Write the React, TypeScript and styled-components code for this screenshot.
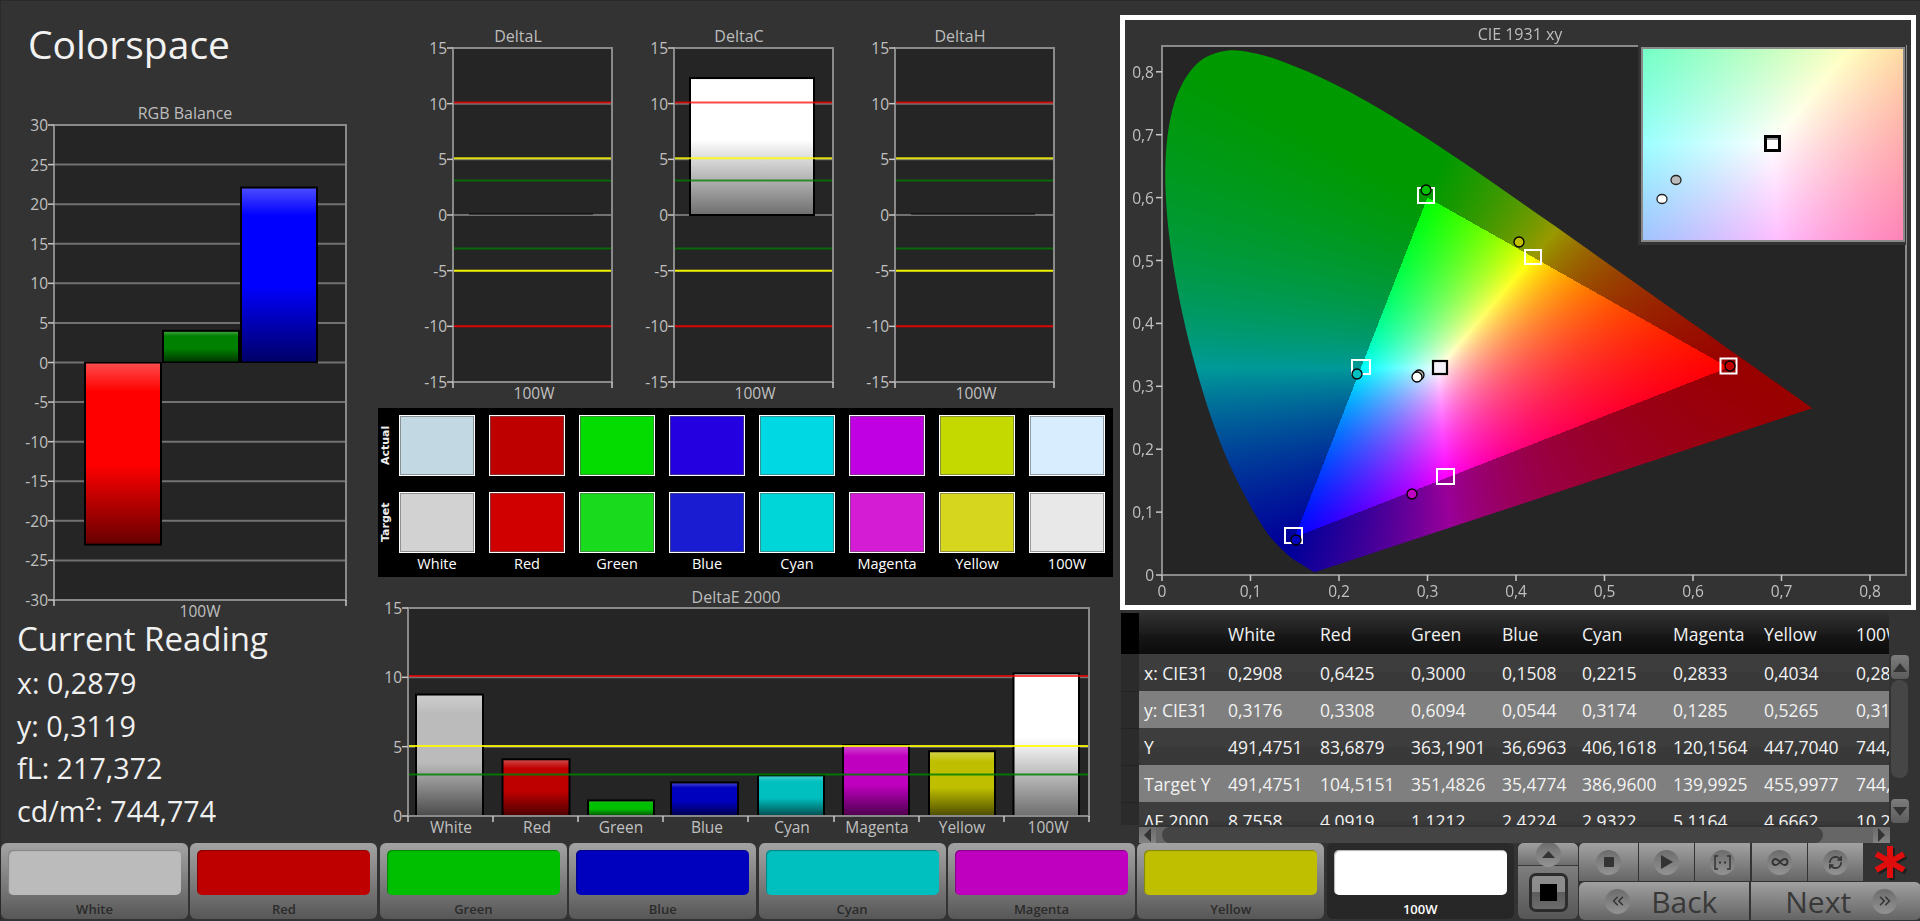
import React, { useEffect, useRef } from "react";
import styled, { createGlobalStyle } from "styled-components";
import { ChevronsLeft, ChevronsRight, Infinity as InfinityIcon, RefreshCw } from "lucide-react";

const FONT = '"Open Sans", "Noto Sans", sans-serif';

const GlobalStyle = createGlobalStyle`
  html, body {
    margin: 0;
    background: #333;
    overflow: hidden;
  }
  * {
    box-sizing: border-box;
  }
`;

const Page = styled.div`
  width: 1920px;
  height: 921px;
  display: flex;
  flex-direction: column;
  background: #333;
  border-top: 1px solid #2a2a2a;
  border-left: 1px solid #2a2a2a;
  font-family: ${FONT};
  overflow: hidden;
`;

const Main = styled.div`
  height: 842px;
  display: flex;
`;

const LeftColumn = styled.div`
  width: 374px;
  display: flex;
  flex-direction: column;
`;

const MiddleColumn = styled.div`
  width: 735px;
  display: flex;
  flex-direction: column;
`;

const RightColumn = styled.div`
  width: 810px;
  padding: 14px 0 0 10px;
  display: flex;
  flex-direction: column;
`;

const Title = styled.h1`
  margin: 0;
  height: 99px;
  padding: 18px 0 0 27px;
  font-size: 39px;
  line-height: 50px;
  font-weight: 400;
  color: #f2f2f2;
`;

const Reading = styled.div`
  padding: 2px 0 0 16px;
  color: #f0f0f0;
`;

const ReadingTitle = styled.div`
  font-size: 33px;
  line-height: 44px;
  margin-bottom: 1px;
`;

const ReadingValue = styled.div`
  font-size: 28.7px;
  line-height: 42.6px;
`;

const ChartSvg = styled.svg`
  display: block;
  flex: none;
  overflow: visible;
`;

const ChartTitle = styled.text`
  font-family: ${FONT};
  font-size: 16px;
  fill: #bdbdbd;
  text-anchor: middle;
`;

const AxisLabel = styled.text`
  font-family: ${FONT};
  font-size: 15.5px;
  fill: #c0c0c0;
`;

const DeltaRow = styled.div`
  height: 407px;
  padding-left: 20px;
  display: flex;
`;

const SwatchPanel = styled.div`
  width: 735px;
  height: 169px;
  margin-left: 3px;
  padding-top: 7px;
  background: #000;
  display: grid;
  grid-template-columns: 7px repeat(8, 76px);
  grid-template-rows: 61px 16px 61px 23px;
  column-gap: 14px;
`;

const SideLabel = styled.div`
  width: 16px;
  margin-left: 1px;
  writing-mode: vertical-rl;
  transform: rotate(180deg);
  text-align: center;
  font-family: "DejaVu Sans", sans-serif;
  font-weight: 700;
  font-size: 11px;
  color: #eee;
`;

const Swatch = styled.div<{ $color: string }>`
  background: ${(p) => p.$color};
  border: 1px solid #fff;
  box-shadow: inset 0 0 0 1px rgba(90, 90, 90, 0.55);
`;

const SwatchLabel = styled.div`
  font-size: 14.5px;
  line-height: 22px;
  text-align: center;
  color: #fff;
`;

const RowGap = styled.div`
  grid-column: 1 / -1;
`;

const CiePanel = styled.div`
  position: relative;
  width: 796px;
  height: 596px;
  border: 5px solid #fff;
  background: #333;
`;

const CieSvg = styled.svg`
  position: absolute;
  left: 0;
  top: 0;
`;

const GamutLayer = styled.canvas`
  position: absolute;
  display: block;
  left: 37px;
  top: 26px;
`;

const Inset = styled.div`
  position: absolute;
  left: 513px;
  top: 25px;
  width: 268px;
  height: 200px;
  padding: 2px 3px;
  background: #333;
`;

const InsetView = styled.div`
  position: relative;
  width: 264px;
  height: 195px;
  border: 2px solid #8a8a8a;
  & canvas {
    display: block;
  }
  & svg {
    position: absolute;
    left: 0;
    top: 0;
  }
`;

const TableArea = styled.div`
  margin: 3px 0 0 1px;
  display: grid;
  grid-template-columns: 768px 21px;
  grid-template-rows: 212px 18px;
`;

const DataTable = styled.table`
  width: 768px;
  height: 212px;
  display: block;
  overflow: hidden;
  table-layout: fixed;
  border-collapse: collapse;
  color: #f2f2f2;
  font-size: 17.5px;
`;

const HeadRow = styled.tr`
  height: 41px;
  background: linear-gradient(#303030 0, #1c1c1c 50%, #181818 50%, #0b0b0b 100%);
`;

const BodyRow = styled.tr<{ $alt?: boolean }>`
  height: 37px;
  background: ${(p) => (p.$alt ? "#7f7f7f" : "linear-gradient(#3d3d3d 0, #3d3d3d 50%, #393939 50%, #383838 100%)")};
`;

const RowMark = styled.td<{ $head?: boolean }>`
  width: 18px;
  min-width: 18px;
  max-width: 18px;
  padding: 0;
  background: ${(p) => (p.$head ? "#000" : "#2b2b2b")};
  border-bottom: ${(p) => (p.$head ? "0" : "1px solid #232323")};
`;

const Cell = styled.td<{ $w: number; $pad?: number }>`
  width: ${(p) => p.$w}px;
  min-width: ${(p) => p.$w}px;
  max-width: ${(p) => p.$w}px;
  padding: 0 0 0 ${(p) => p.$pad ?? 4}px;
  white-space: nowrap;
  overflow: hidden;
  line-height: 24px;
`;

const VScroll = styled.div`
  margin-top: 42px;
  height: 168px;
  width: 19px;
  margin-left: 1px;
  background: #333;
  display: flex;
  flex-direction: column;
  align-items: center;
`;

const ScrollButton = styled.div`
  flex: none;
  width: 18px;
  height: 24px;
  border-radius: 4px;
  background: linear-gradient(#7c7c7c, #5c5c5c);
  display: flex;
  align-items: center;
  justify-content: center;
`;

const VThumb = styled.div`
  flex: none;
  width: 17px;
  height: 98px;
  margin: 1px 0 auto;
  border-radius: 8px;
  background: #464646;
`;

const HScroll = styled.div`
  margin-left: 18px;
  margin-top: 2px;
  width: 751px;
  height: 16px;
  background: #666;
  display: flex;
`;

const HThumb = styled.div`
  width: 661px;
  margin-left: 6px;
  border-radius: 8px;
  background: #444;
`;

const HButton = styled.div<{ $flip?: boolean }>`
  flex: none;
  width: 17px;
  background: linear-gradient(#6b6b6b, #828282);
  display: flex;
  align-items: center;
  justify-content: center;
  margin-left: ${(p) => (p.$flip ? "auto" : "0")};
`;

const Arrow = styled.svg`
  display: block;
`;

const Toolbar = styled.div`
  height: 78px;
  display: flex;
  align-items: flex-start;
  padding-top: 0;
`;

const ColorButton = styled.div<{ $active?: boolean }>`
  flex: none;
  width: 187px;
  height: 76px;
  margin-right: 2.4px;
  padding: 7px 7px 0 7px;
  border-radius: 6px;
  background: ${(p) => (p.$active ? "linear-gradient(#2a2a2a, #262626)" : "linear-gradient(#a3a3a3, #8e8e8e 30%, #575757)")};
  display: flex;
  flex-direction: column;
`;

const ColorFace = styled.div<{ $color: string }>`
  height: 45px;
  border-radius: 5px;
  background: ${(p) => p.$color};
  box-shadow: inset 1px 1px 1px rgba(0, 0, 0, 0.3);
`;

const ColorName = styled.div<{ $active?: boolean }>`
  margin-top: 6px;
  text-align: center;
  font-size: 13px;
  line-height: 16px;
  font-weight: 600;
  color: ${(p) => (p.$active ? "#fff" : "#2b2b2b")};
`;

const StopStack = styled.div`
  flex: none;
  width: 60px;
  height: 76px;
  margin: 0 1px 0 2px;
  border-radius: 6px;
  overflow: hidden;
  background: linear-gradient(#8f8f8f, #565656);
  display: flex;
  flex-direction: column;
`;

const StackTop = styled.div`
  height: 23px;
  background: linear-gradient(#a0a0a0, #6e6e6e);
  border-bottom: 1px solid #3b3b3b;
  display: flex;
  align-items: center;
  justify-content: center;
`;

const StackBottom = styled.div`
  flex: 1;
  display: flex;
  align-items: center;
  justify-content: center;
`;

const StopRing = styled.div`
  width: 39px;
  height: 39px;
  border: 3px solid #2c2c2c;
  border-radius: 7px;
  background: linear-gradient(#8e8e8e, #8a8a8a 50%, #5c5c5c 50%, #6c6c6c);
  display: flex;
  align-items: center;
  justify-content: center;
`;

const StopMark = styled.div`
  width: 17px;
  height: 17px;
  background: #000;
`;

const Controls = styled.div`
  flex: none;
  width: 343px;
  display: flex;
  flex-direction: column;
  gap: 1px;
`;

const ControlRow = styled.div`
  display: flex;
  gap: 1px;
  height: 38px;
`;

const RoundButton = styled.div`
  flex: none;
  width: 55px;
  background: linear-gradient(#a2a2a2, #666);
  display: flex;
  align-items: center;
  justify-content: center;
  &:first-child {
    width: 59px;
    border-radius: 5px 0 0 0;
  }
  &:nth-child(3) {
    margin-right: 1px;
  }
`;

const Disc = styled.div`
  width: 25px;
  height: 25px;
  border-radius: 50%;
  background: linear-gradient(#6c6c6c, #939393);
  display: flex;
  align-items: center;
  justify-content: center;
  color: #333;
`;

const StarSlot = styled.div`
  flex: 1;
  display: flex;
  align-items: center;
  justify-content: center;
  padding-right: 6px;
`;

const NavButton = styled.div<{ $next?: boolean }>`
  flex: none;
  width: 170px;
  height: 38px;
  margin-left: ${(p) => (p.$next ? "1px" : "0")};
  border-radius: ${(p) => (p.$next ? "0 6px 6px 0" : "6px 0 0 6px")};
  background: linear-gradient(#a0a0a0, #646464);
  display: flex;
  flex-direction: ${(p) => (p.$next ? "row-reverse" : "row")};
  align-items: center;
  padding: 0 24px 0 26px;
  justify-content: flex-start;
  gap: 21px;
  font-size: 30px;
  font-weight: 500;
  color: #383838;
`;

type Line = { value: number; color: string; opacity?: number };
type Bar = { left: number; right: number; value: number; color: string; glow?: boolean };
type Plot = { x: number; y: number; w: number; h: number };

type ChartProps = {
  id: string;
  width: number;
  height: number;
  plot: Plot;
  title: string;
  titleX: number;
  titleY: number;
  min: number;
  max: number;
  ticks: number[];
  grid: number[];
  lines?: Line[];
  bars: Bar[];
  categories: string[];
  categoryCenters: number[];
  categoryTicks: number[];
};

const shade = (hex: string, target: number, t: number) => {
  const n = parseInt(hex.slice(1), 16);
  const part = (c: number) => Math.round(c + (target - c) * t);
  return `rgb(${part((n >> 16) & 255)},${part((n >> 8) & 255)},${part(n & 255)})`;
};

const Chart = ({ id, width, height, plot, title, titleX, titleY, min, max, ticks, grid, lines = [], bars, categories, categoryCenters, categoryTicks }: ChartProps) => {
  const scale = plot.h / (max - min);
  const yOf = (v: number) => plot.y + (max - v) * scale;
  const bottom = plot.y + plot.h;
  return (
    <ChartSvg width={width} height={height}>
      <defs>
        {bars.map((b, i) =>
          b.glow ? (
            <linearGradient key={i} id={`${id}-${i}`} x1="0" y1="0" x2="0" y2="1">
              <stop offset="0" stopColor="#fff" />
              <stop offset="0.45" stopColor="#fff" />
              <stop offset="1" stopColor="#6e6e6e" />
            </linearGradient>
          ) : (
            <linearGradient key={i} id={`${id}-${i}`} x1="0" y1="0" x2="0" y2="1">
              <stop offset="0" stopColor={shade(b.color, 255, 0.3)} />
              <stop offset="0.16" stopColor={b.color} />
              <stop offset="0.56" stopColor={b.color} />
              <stop offset="1" stopColor={shade(b.color, 0, 0.6)} />
            </linearGradient>
          )
        )}
      </defs>
      <ChartTitle x={titleX} y={titleY}>{title}</ChartTitle>
      <rect x={plot.x} y={plot.y} width={plot.w} height={plot.h} fill="#252525" />
      {grid.map((g) => (
        <line key={g} x1={plot.x} x2={plot.x + plot.w} y1={yOf(g)} y2={yOf(g)} stroke="#727272" strokeWidth="2" />
      ))}
      {bars.map((b, i) => {
        const top = Math.min(yOf(b.value), yOf(0));
        const h = Math.abs(yOf(b.value) - yOf(0));
        return h === 0 ? (
          <line key={i} x1={b.left} x2={b.right} y1={top - 1} y2={top - 1} stroke="#000" strokeWidth="1" />
        ) : (
          <rect key={i} x={b.left} y={top} width={b.right - b.left} height={h} fill={`url(#${id}-${i})`} stroke="#000" strokeWidth="2" />
        );
      })}
      {lines.map((l, i) => (
        <line key={i} x1={plot.x} x2={plot.x + plot.w + 1} y1={yOf(l.value)} y2={yOf(l.value)} stroke={l.color} strokeOpacity={l.opacity ?? 1} strokeWidth="2" />
      ))}
      <rect x={plot.x} y={plot.y} width={plot.w} height={plot.h} fill="none" stroke="#8a8a8a" strokeWidth="2" />
      {ticks.map((t) => (
        <g key={t}>
          <line x1={plot.x - 6} x2={plot.x} y1={yOf(t)} y2={yOf(t)} stroke="#c8c8c8" strokeWidth="1.5" />
          <AxisLabel x={plot.x - 6} y={yOf(t) + 6} textAnchor="end">{t}</AxisLabel>
        </g>
      ))}
      {categoryTicks.map((x) => (
        <line key={x} x1={x} x2={x} y1={bottom} y2={bottom + 6} stroke="#c8c8c8" strokeWidth="1.5" />
      ))}
      {categories.map((c, i) => (
        <AxisLabel key={c} x={categoryCenters[i]} y={bottom + 17} textAnchor="middle">{c}</AxisLabel>
      ))}
    </ChartSvg>
  );
};

const deltaLines: Line[] = [
  { value: 10.1, color: "#ff0000", opacity: 0.72 },
  { value: 5.1, color: "#ffff00", opacity: 0.8 },
  { value: 3.1, color: "#008000", opacity: 0.75 },
  { value: -3, color: "#008000", opacity: 0.75 },
  { value: -5, color: "#ffff00", opacity: 0.95 },
  { value: -10, color: "#ff0000", opacity: 0.85 },
];

const DeltaChart = ({ id, title, titleX, value, glow }: { id: string; title: string; titleX: number; value: number; glow?: boolean }) => (
  <Chart
    id={id}
    width={221}
    height={407}
    plot={{ x: 58, y: 47, w: 159, h: 334 }}
    title={title}
    titleX={titleX}
    titleY={41}
    min={-15}
    max={15}
    ticks={[15, 10, 5, 0, -5, -10, -15]}
    grid={[10, 5, 0]}
    lines={deltaLines}
    bars={[{ left: 74, right: 198, value, color: "#ffffff", glow }]}
    categories={["100W"]}
    categoryCenters={[139]}
    categoryTicks={[58, 217]}
  />
);

const swatchActual = ["#c2d8e2", "#bf0000", "#04dc00", "#2400e0", "#00d9e4", "#c000e2", "#c4d900", "#d8eeff"];
const swatchTarget = ["#d2d2d2", "#d10000", "#1ada1e", "#1a1cd2", "#00d5d8", "#d41cd4", "#d6d61e", "#e8e8e8"];
const names = ["White", "Red", "Green", "Blue", "Cyan", "Magenta", "Yellow", "100W"];
const faces = ["#bbbbbb", "#bf0000", "#00bf00", "#0000bf", "#00bfbf", "#bf00bf", "#bfbf00", "#ffffff"];

const deltaEValues = [8.76, 4.09, 1.12, 2.42, 2.93, 5.12, 4.67, 10.28];
const deltaELefts = [41, 127.5, 213, 296, 383, 468, 554, 638.5];
const deltaERights = [108, 194.5, 279, 363, 449, 534, 620, 704];
const deltaECenters = [76, 162, 246, 332, 417, 502, 587, 673];

const locus: [number, number][] = [
  [0.1741, 0.005], [0.1733, 0.0048], [0.1714, 0.0051], [0.1644, 0.0109], [0.1566, 0.0177], [0.144, 0.0297],
  [0.1241, 0.0578], [0.1096, 0.0868], [0.0913, 0.1327], [0.0687, 0.2007], [0.0454, 0.295], [0.0235, 0.4127],
  [0.0082, 0.5384], [0.0039, 0.6548], [0.0139, 0.7502], [0.0389, 0.812], [0.0743, 0.8338], [0.1142, 0.8262],
  [0.1547, 0.8059], [0.1929, 0.7816], [0.2296, 0.7543], [0.2658, 0.7243], [0.3016, 0.6923], [0.3373, 0.6589],
  [0.3731, 0.6245], [0.4087, 0.5896], [0.4441, 0.5547], [0.4788, 0.5202], [0.5125, 0.4866], [0.5448, 0.4544],
  [0.5752, 0.4242], [0.6029, 0.3965], [0.627, 0.3725], [0.6482, 0.3514], [0.6658, 0.334], [0.6915, 0.3083],
  [0.7079, 0.292], [0.719, 0.2809], [0.73, 0.27], [0.7347, 0.2653],
];

// xy to display colour, everything outside the sRGB triangle is clipped and dimmed
const xyColor = (x: number, y: number): [number, number, number] => {
  const yy = Math.max(y, 0.001);
  const X = x / yy;
  const Z = (1 - x - yy) / yy;
  const r = 3.2406 * X - 1.5372 - 0.4986 * Z;
  const g = -0.9689 * X + 1.8758 + 0.0415 * Z;
  const b = 0.0557 * X - 0.204 + 1.057 * Z;
  const inside = r >= 0 && g >= 0 && b >= 0;
  const cr = Math.max(r, 0);
  const cg = Math.max(g, 0);
  const cb = Math.max(b, 0);
  const m = Math.max(cr, cg, cb, 0.0001);
  const k = (inside ? 255 : 153) / m;
  return [cr * k, cg * k, cb * k];
};

type GamutProps = {
  width: number;
  height: number;
  x0: number;
  x1: number;
  y0: number;
  y1: number;
  clip?: boolean;
};

const Gamut = ({ width, height, x0, x1, y0, y1, clip }: GamutProps) => {
  const ref = useRef<HTMLCanvasElement>(null);

  useEffect(() => {
    const canvas = ref.current;
    const ctx = canvas?.getContext("2d");
    if (!canvas || !ctx) return;
    const off = document.createElement("canvas");
    off.width = width;
    off.height = height;
    const offCtx = off.getContext("2d");
    if (!offCtx) return;
    const img = offCtx.createImageData(width, height);
    for (let py = 0; py < height; py++) {
      for (let px = 0; px < width; px++) {
        const x = x0 + ((px + 0.5) / width) * (x1 - x0);
        const y = y1 - ((py + 0.5) / height) * (y1 - y0);
        const [r, g, b] = xyColor(x, y);
        const i = (py * width + px) * 4;
        img.data[i] = r;
        img.data[i + 1] = g;
        img.data[i + 2] = b;
        img.data[i + 3] = 255;
      }
    }
    offCtx.putImageData(img, 0, 0);
    if (clip) {
      ctx.fillStyle = "#252525";
      ctx.fillRect(0, 0, width, height);
      const pts = locus.map(([x, y]) => [((x - x0) / (x1 - x0)) * width, ((y1 - y) / (y1 - y0)) * height]);
      ctx.beginPath();
      ctx.moveTo(pts[0][0], pts[0][1]);
      // smooth the 5nm samples so the horseshoe has no corners
      for (let i = 0; i < pts.length - 1; i++) {
        const p0 = pts[Math.max(i - 1, 0)];
        const p1 = pts[i];
        const p2 = pts[i + 1];
        const p3 = pts[Math.min(i + 2, pts.length - 1)];
        ctx.bezierCurveTo(p1[0] + (p2[0] - p0[0]) / 6, p1[1] + (p2[1] - p0[1]) / 6, p2[0] - (p3[0] - p1[0]) / 6, p2[1] - (p3[1] - p1[1]) / 6, p2[0], p2[1]);
      }
      ctx.closePath();
      ctx.clip();
    }
    ctx.drawImage(off, 0, 0);
  }, [width, height, x0, x1, y0, y1, clip]);

  return clip ? <GamutLayer ref={ref} width={width} height={height} /> : <canvas ref={ref} width={width} height={height} />;
};

const cieX = (v: number) => 37 + 885 * v;
const cieY = (v: number) => 555 - 629 * v;
const cieTicks = [0, 0.1, 0.2, 0.3, 0.4, 0.5, 0.6, 0.7, 0.8];
const tickName = (v: number) => (v === 0 ? "0" : v.toFixed(1).replace(".", ","));

const targets = [
  { x: 227, y: 340, w: 18, h: 14 },
  { x: 160, y: 508, w: 17, h: 15 },
  { x: 312, y: 449, w: 17, h: 15 },
  { x: 293, y: 168, w: 16, h: 15 },
  { x: 400, y: 230, w: 16, h: 14 },
  { x: 595.5, y: 338.5, w: 16, h: 15 },
];

const readings = [
  { x: 232, y: 354, fill: "#00c0c0" },
  { x: 171, y: 520, fill: "#0000c0" },
  { x: 287, y: 474, fill: "#c000c0" },
  { x: 294, y: 355, fill: "#bbbbbb" },
  { x: 292, y: 357, fill: "#ffffff" },
  { x: 301, y: 170, fill: "#00c000" },
  { x: 394, y: 222, fill: "#c0c000" },
  { x: 605, y: 346, fill: "#c00000" },
];

const CiePlot = () => (
  <CiePanel>
    <Gamut clip width={744} height={529} x0={0} x1={744 / 885} y0={0} y1={529 / 629} />
    <CieSvg width={786} height={586}>
      <ChartTitle x={395} y={20}>CIE 1931 xy</ChartTitle>
      <rect x={37} y={26} width={744} height={529} fill="none" stroke="#8a8a8a" strokeWidth="2" />
      {cieTicks.map((v) => (
        <g key={v}>
          <line x1={31} x2={37} y1={cieY(v)} y2={cieY(v)} stroke="#c8c8c8" strokeWidth="1.5" />
          <AxisLabel x={29} y={cieY(v) + 6} textAnchor="end">{tickName(v)}</AxisLabel>
          <line x1={cieX(v)} x2={cieX(v)} y1={555} y2={561} stroke="#c8c8c8" strokeWidth="1.5" />
          <AxisLabel x={cieX(v)} y={577} textAnchor="middle">{tickName(v)}</AxisLabel>
        </g>
      ))}
      {targets.map((t, i) => (
        <rect key={i} x={t.x} y={t.y} width={t.w} height={t.h} fill="none" stroke="#fff" strokeWidth="2" />
      ))}
      <rect x={308} y={341} width={14} height={13} fill="#f4f0fa" stroke="#000" strokeWidth="2.2" />
      {readings.map((r, i) => (
        <ellipse key={i} cx={r.x} cy={r.y} rx={5} ry={5} fill={r.fill} stroke="#000" strokeWidth="1.3" />
      ))}
    </CieSvg>
    <Inset>
      <InsetView>
        <Gamut width={260} height={191} x0={0.2833} x1={0.3426} y0={0.2988} y1={0.3585} />
        <svg width={260} height={191}>
          <rect x={122.5} y={87.5} width={14} height={14} fill="#fff" stroke="#000" strokeWidth="3" />
          <line x1={124} x2={135} y1={90} y2={90} stroke="#999" strokeWidth="2" />
          <ellipse cx={33} cy={131} rx={5} ry={4.5} fill="#bbb" stroke="#222" strokeWidth="1.3" />
          <ellipse cx={19} cy={150} rx={5} ry={4.5} fill="#fff" stroke="#222" strokeWidth="1.3" />
        </svg>
      </InsetView>
    </Inset>
  </CiePanel>
);

const columnWidths = [85, 92, 91, 91, 80, 91, 91, 92];
const headers = ["", "White", "Red", "Green", "Blue", "Cyan", "Magenta", "Yellow", "100W"];
const rows = [
  ["x: CIE31", "0,2908", "0,6425", "0,3000", "0,1508", "0,2215", "0,2833", "0,4034", "0,2879"],
  ["y: CIE31", "0,3176", "0,3308", "0,6094", "0,0544", "0,3174", "0,1285", "0,5265", "0,3119"],
  ["Y", "491,4751", "83,6879", "363,1901", "36,6963", "406,1618", "120,1564", "447,7040", "744,7740"],
  ["Target Y", "491,4751", "104,5151", "351,4826", "35,4774", "386,9600", "139,9925", "455,9977", "744,7740"],
  ["ΔE 2000", "8,7558", "4,0919", "1,1212", "2,4224", "2,9322", "5,1164", "4,6662", "10,2534"],
];

const cellWidth = (i: number) => (i === 0 ? 85 : columnWidths[i]);

const ReadingsTable = () => (
  <TableArea>
    <DataTable>
      <tbody>
        <HeadRow>
          <RowMark $head />
          {headers.map((h, i) => (
            <Cell key={i} $w={cellWidth(i)}>{h}</Cell>
          ))}
        </HeadRow>
        {rows.map((r, n) => (
          <BodyRow key={r[0]} $alt={n % 2 === 1}>
            <RowMark />
            {r.map((v, i) => (
              <Cell key={i} $w={cellWidth(i)} $pad={i === 0 ? 5 : 4}>{v}</Cell>
            ))}
          </BodyRow>
        ))}
      </tbody>
    </DataTable>
    <VScroll>
      <ScrollButton>
        <Arrow width="14" height="9" viewBox="0 0 14 9"><path d="M7 0 L14 9 L0 9 Z" fill="#333" /></Arrow>
      </ScrollButton>
      <VThumb />
      <ScrollButton>
        <Arrow width="14" height="9" viewBox="0 0 14 9"><path d="M0 0 L14 0 L7 9 Z" fill="#333" /></Arrow>
      </ScrollButton>
    </VScroll>
    <HScroll>
      <HButton>
        <Arrow width="7" height="14" viewBox="0 0 7 14"><path d="M7 0 L7 14 L0 7 Z" fill="#333" /></Arrow>
      </HButton>
      <HThumb />
      <HButton $flip>
        <Arrow width="7" height="14" viewBox="0 0 7 14"><path d="M0 0 L7 7 L0 14 Z" fill="#333" /></Arrow>
      </HButton>
    </HScroll>
  </TableArea>
);

const RedStar = () => (
  <svg width="36" height="36" viewBox="-18 -18 36 36">
    {[0, 60, 120].map((a) => (
      <line key={a} x1="0" x2="0" y1="-16" y2="16" transform={`translate(2 2) rotate(${a})`} stroke="#000" strokeOpacity="0.4" strokeWidth="6" />
    ))}
    {[0, 60, 120].map((a) => (
      <line key={a} x1="0" x2="0" y1="-16" y2="16" transform={`rotate(${a})`} stroke="#e00d0d" strokeWidth="6" />
    ))}
  </svg>
);

const ToolControls = () => (
  <>
    <StopStack>
      <StackTop>
        <Disc>
          <Arrow width="13" height="7" viewBox="0 0 13 7"><path d="M6.5 0 L13 7 L0 7 Z" fill="#333" /></Arrow>
        </Disc>
      </StackTop>
      <StackBottom>
        <StopRing>
          <StopMark />
        </StopRing>
      </StackBottom>
    </StopStack>
    <Controls>
      <ControlRow>
        <RoundButton>
          <Disc>
            <svg width="10" height="10" viewBox="0 0 10 10"><rect width="10" height="10" rx="1" fill="#333" /></svg>
          </Disc>
        </RoundButton>
        <RoundButton>
          <Disc>
            <svg width="12" height="14" viewBox="0 0 12 14"><path d="M0 0 L12 7 L0 14 Z" fill="#333" /></svg>
          </Disc>
        </RoundButton>
        <RoundButton>
          <Disc>
            <svg width="17" height="15" viewBox="0 0 17 15" fill="none" stroke="#333" strokeWidth="1.5">
              <path d="M4 1 H1 V14 H4 M13 1 H16 V14 H13" />
              <path d="M5 7.5 H7 M10 7.5 H12" strokeWidth="2" />
            </svg>
          </Disc>
        </RoundButton>
        <RoundButton><Disc><InfinityIcon size={18} strokeWidth={2.4} /></Disc></RoundButton>
        <RoundButton><Disc><RefreshCw size={15} strokeWidth={2.6} /></Disc></RoundButton>
        <StarSlot><RedStar /></StarSlot>
      </ControlRow>
      <ControlRow>
        <NavButton><Disc><ChevronsLeft size={18} strokeWidth={2} /></Disc>Back</NavButton>
        <NavButton $next><Disc><ChevronsRight size={18} strokeWidth={2} /></Disc>Next</NavButton>
      </ControlRow>
    </Controls>
  </>
);

export default function App() {
  return (
    <Page>
      <GlobalStyle />
      <Main>
        <LeftColumn>
          <Title>Colorspace</Title>
          <Chart
            id="rgb"
            width={374}
            height={515}
            plot={{ x: 53, y: 25, w: 292, h: 475 }}
            title="RGB Balance"
            titleX={184}
            titleY={19}
            min={-30}
            max={30}
            ticks={[30, 25, 20, 15, 10, 5, 0, -5, -10, -15, -20, -25, -30]}
            grid={[25, 20, 15, 10, 5, 0, -5, -10, -15, -20, -25]}
            bars={[
              { left: 84, right: 160, value: -23, color: "#ff0000" },
              { left: 162, right: 238, value: 4, color: "#008000" },
              { left: 240, right: 316, value: 22.1, color: "#0000ff" },
            ]}
            categories={["100W"]}
            categoryCenters={[199]}
            categoryTicks={[53, 345]}
          />
          <Reading>
            <ReadingTitle>Current Reading</ReadingTitle>
            <ReadingValue>x: 0,2879</ReadingValue>
            <ReadingValue>y: 0,3119</ReadingValue>
            <ReadingValue>fL: 217,372</ReadingValue>
            <ReadingValue>cd/m²: 744,774</ReadingValue>
          </Reading>
        </LeftColumn>
        <MiddleColumn>
          <DeltaRow>
            <DeltaChart id="dl" title="DeltaL" titleX={123} value={0} />
            <DeltaChart id="dc" title="DeltaC" titleX={123} value={12.3} glow />
            <DeltaChart id="dh" title="DeltaH" titleX={123} value={0} />
          </DeltaRow>
          <SwatchPanel>
            <SideLabel>Actual</SideLabel>
            {swatchActual.map((c) => (
              <Swatch key={c} $color={c} />
            ))}
            <RowGap />
            <SideLabel>Target</SideLabel>
            {swatchTarget.map((c) => (
              <Swatch key={c} $color={c} />
            ))}
            <div />
            {names.map((n) => (
              <SwatchLabel key={n}>{n}</SwatchLabel>
            ))}
          </SwatchPanel>
          <Chart
            id="de"
            width={735}
            height={266}
            plot={{ x: 33, y: 31, w: 681, h: 208 }}
            title="DeltaE 2000"
            titleX={361}
            titleY={26}
            min={0}
            max={15}
            ticks={[15, 10, 5, 0]}
            grid={[10, 5]}
            lines={[
              { value: 10.1, color: "#ff0000", opacity: 0.72 },
              { value: 5.05, color: "#ffff00", opacity: 0.85 },
              { value: 3, color: "#008000", opacity: 0.85 },
            ]}
            bars={deltaEValues.map((value, i) => ({
              left: deltaELefts[i],
              right: deltaERights[i],
              value,
              color: faces[i],
              glow: i === 7,
            }))}
            categories={names}
            categoryCenters={deltaECenters}
            categoryTicks={[33, 118, 203, 288, 373, 459, 544, 629, 714]}
          />
        </MiddleColumn>
        <RightColumn>
          <CiePlot />
          <ReadingsTable />
        </RightColumn>
      </Main>
      <Toolbar>
        {names.map((n, i) => (
          <ColorButton key={n} $active={i === 7}>
            <ColorFace $color={faces[i]} />
            <ColorName $active={i === 7}>{n}</ColorName>
          </ColorButton>
        ))}
        <ToolControls />
      </Toolbar>
    </Page>
  );
}
